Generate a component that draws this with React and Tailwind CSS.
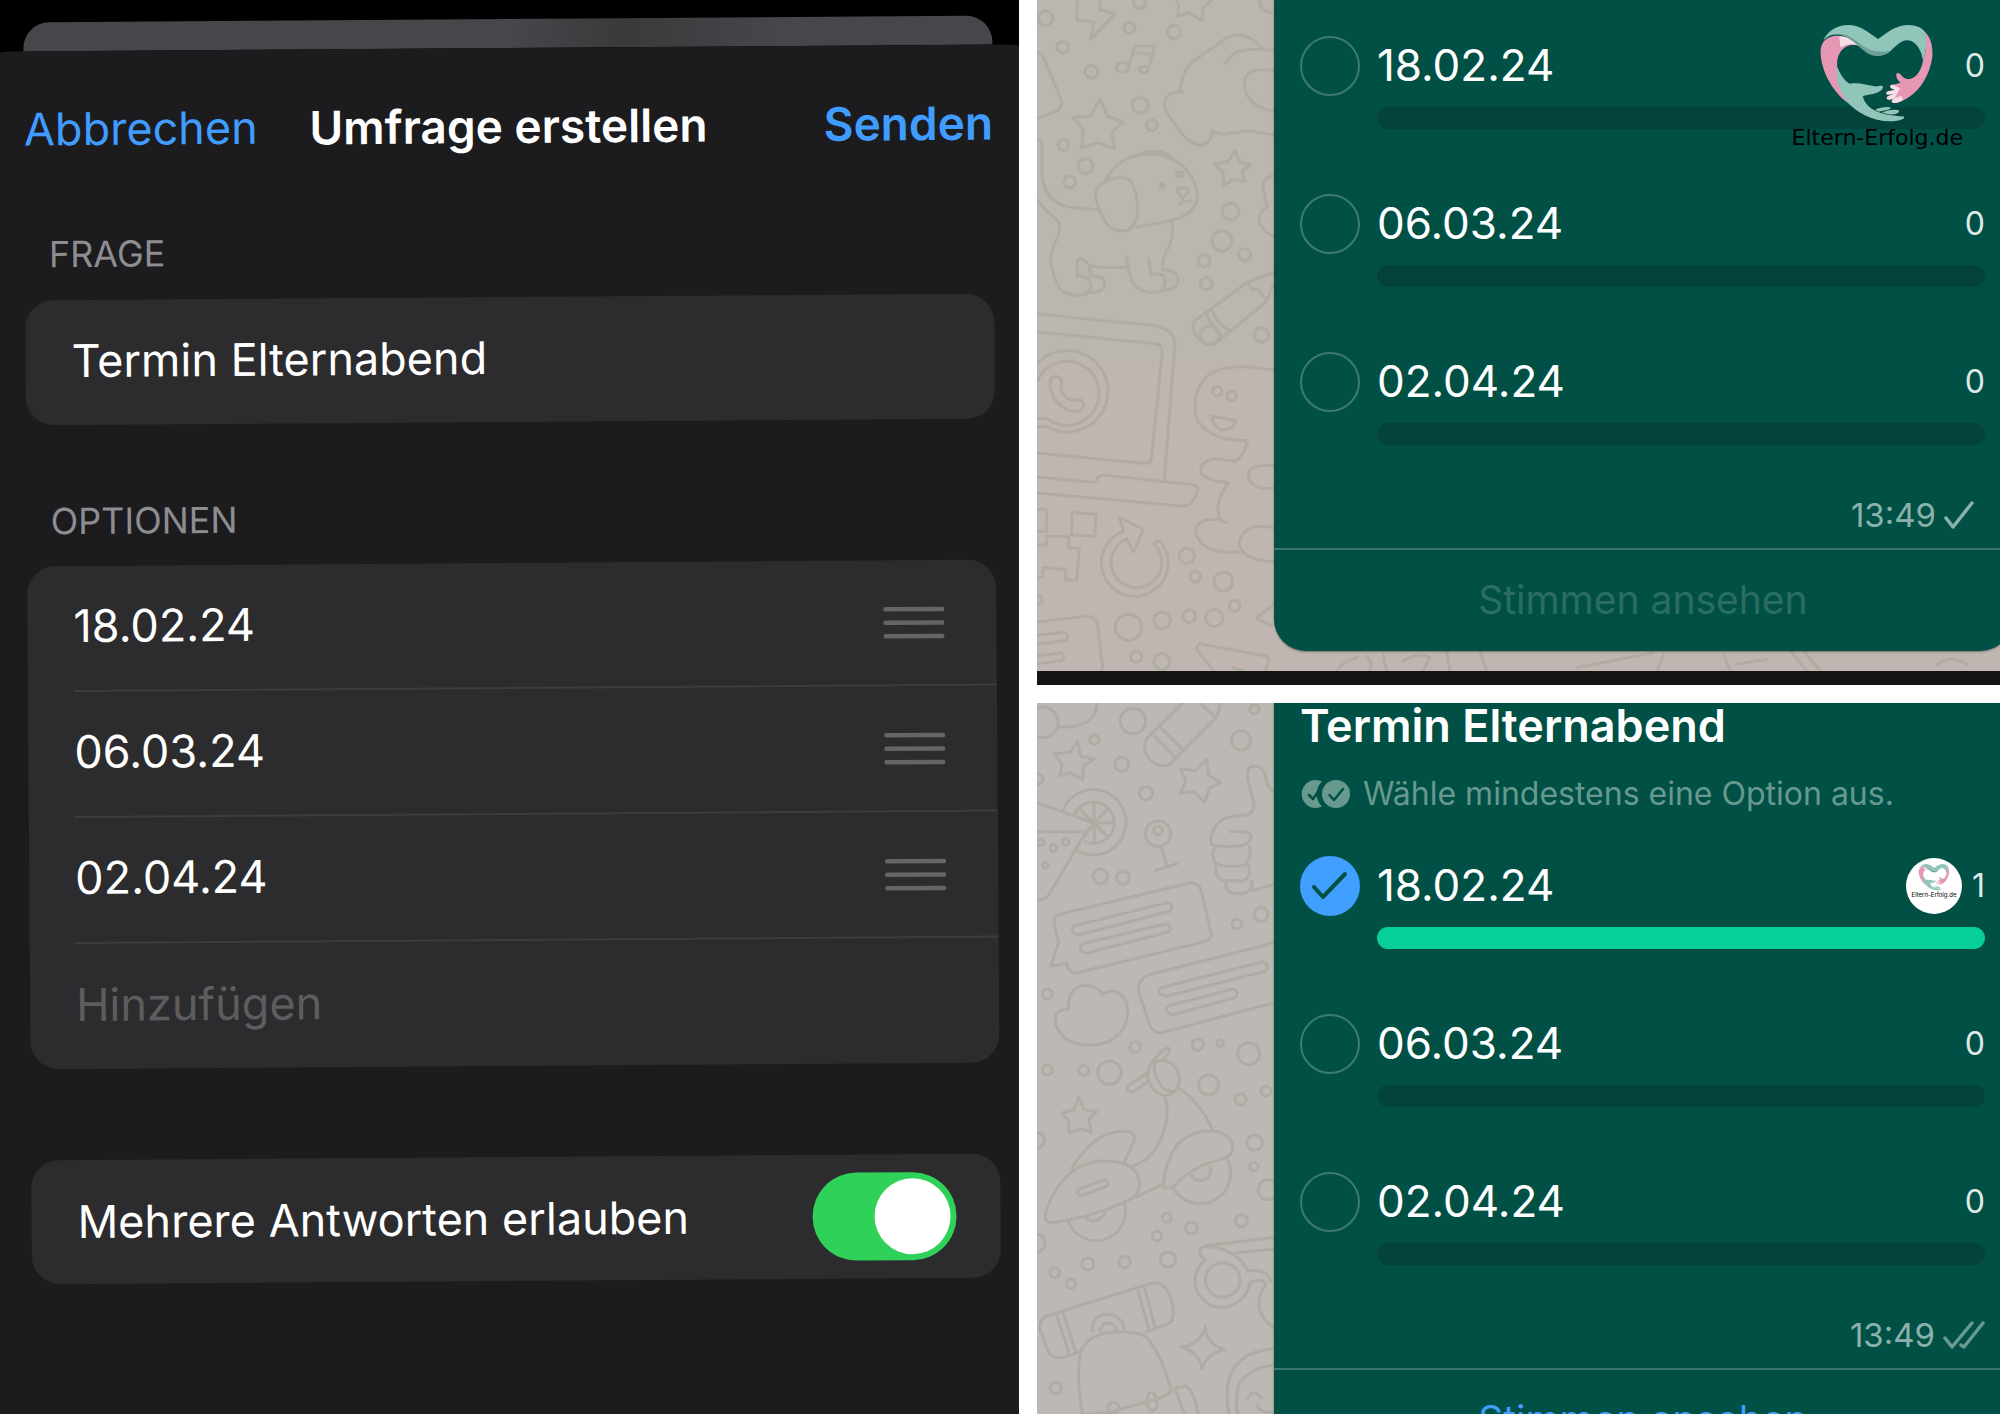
import React, { useState } from 'react';

const options = ['18.02.24', '06.03.24', '02.04.24'];

function HeartLogo({ className }) {
  return (
    <svg viewBox="120 66 348 302" className={className} aria-hidden="true">
      <path fill="#e597b4" d="M127 156C126 126 146 107 176 107C202 107 222 118 238 134C202 128 177 152 176 186C174 225 184 266 208 306C160 270 128 208 127 156Z" />
      <path fill="#f6dfe7" d="M182 108C206 108 224 120 240 136C220 129 202 130 186 142Z" />
      <path fill="#e597b4" d="M433 93C453 110 460 138 458 168C452 218 424 266 388 289C372 299 356 307 345 306C334 304 336 297 346 292L331 296C321 295 320 288 329 284L344 280L326 281C318 278 321 272 330 270L348 267L336 262C330 257 334 251 342 252L364 246C354 238 350 228 351 220C356 212 364 220 370 228C376 234 386 236 394 234C414 228 427 204 431 176C441 150 443 118 433 93Z" />
      <path fill="#f6dfe7" d="M362 262L346 292L331 296C321 295 320 288 329 284L344 280L326 281C318 278 321 272 330 270L348 267L336 262C330 257 334 251 342 252ZM345 306C334 304 336 297 346 292L366 284L372 296C362 302 352 306 345 306Z" />
      <path fill="#92c5b9" d="M134 122C148 90 180 74 212 75C250 76 275 104 297 116C320 102 345 76 385 75C412 75 428 84 436 96C443 124 440 152 430 180C426 148 408 121 385 120C360 120 346 144 326 158C306 170 280 165 262 153C240 138 216 104 176 102C156 102 142 112 134 122Z" />
      <path fill="#6f9f96" d="M148 108C184 92 214 106 242 130C268 150 296 160 334 151C312 172 284 170 262 156C238 140 214 106 176 103C164 103 156 104 148 108Z" />
      <path fill="#92c5b9" d="M176 198C186 224 198 240 213 249C240 244 264 253 290 257C300 257 308 252 312 258C311 273 290 279 252 285C256 306 270 320 296 332C322 344 350 343 373 346C379 352 366 358 340 360C282 362 238 336 208 306C180 268 170 236 176 198Z" />
      <path fill="#92c5b9" d="M288 326C304 318 324 316 336 320C332 327 314 328 300 332ZM308 335C324 327 350 323 360 329C358 339 342 341 328 339Z" />
    </svg>
  );
}

function DragHandle() {
  return (
    <svg viewBox="0 0 61 33" className="h-[33px] w-[61px] shrink-0" aria-hidden="true">
      <path d="M2 3H59M2 16.5H59M2 30H59" stroke="#656568" strokeWidth="4.5" strokeLinecap="round" />
    </svg>
  );
}

function CreatePoll() {
  const [multiple, setMultiple] = useState(true);

  return (
    <section className="min-h-0 overflow-hidden bg-black">
      <div className="flex h-full -rotate-[0.4deg] flex-col">
        <div className="ml-[28px] mr-[22px] mt-[19px] h-[29px] shrink-0 rounded-t-[26px] bg-linear-to-r from-[#46474b] from-50% via-[#3a3a3c] via-62% to-[#46474b] to-78%" />
        <form className="-mb-6 -ml-4 -mr-6 flex-1 rounded-t-[28px] bg-[#1c1c1e] pl-11 pr-[46px] pt-[50px]" onSubmit={(e) => e.preventDefault()}>
          <header className="grid grid-cols-[1fr_auto_1fr] items-center text-[46px] leading-[56px]">
            <button type="button" className="justify-self-start text-[45px] text-[#409cff]">
              Abbrechen
            </button>
            <h1 className="font-semibold text-white">Umfrage erstellen</h1>
            <button type="submit" className="justify-self-end font-semibold text-[#409cff]">
              Senden
            </button>
          </header>

          <label htmlFor="question" className="mt-[77px] block pl-6 text-[36px] leading-10 text-[#8d8d92]">
            FRAGE
          </label>
          <div className="mt-[26px] rounded-[28px] bg-[#2c2c2e] pl-[46px]">
            <input id="question" type="text" defaultValue="Termin Elternabend" className="h-[125px] w-full bg-transparent pb-1 text-[45px] text-white outline-none" />
          </div>

          <h2 className="mt-[76px] pl-6 text-[36px] leading-10 text-[#8d8d92]">OPTIONEN</h2>
          <ul className="mt-[25px] rounded-[28px] bg-[#2c2c2e] pl-[46px]">
            {options.map((option, i) => (
              <li key={option} className="flex h-[126px] items-center border-b-2 border-[#3d3d40] pr-[52px]">
                <input type="text" aria-label={`Option ${i + 1}`} defaultValue={option} className="min-w-0 flex-1 bg-transparent pb-1 text-[45px] text-white outline-none" />
                <DragHandle />
              </li>
            ))}
            <li className="flex h-[125px] items-center pr-[52px]">
              <input type="text" aria-label="Neue Option" placeholder="Hinzufügen" className="min-w-0 flex-1 bg-transparent pb-1 text-[45px] text-white outline-none placeholder:text-[#5d5d60]" />
            </li>
          </ul>

          <div className="mt-[91px] flex h-[124px] items-center justify-between rounded-[28px] bg-[#2c2c2e] pl-[46px] pr-11">
            <label htmlFor="multiple" className="text-[45px] text-white">
              Mehrere Antworten erlauben
            </label>
            <input
              id="multiple"
              type="checkbox"
              role="switch"
              checked={multiple}
              onChange={(e) => setMultiple(e.target.checked)}
              className="flex h-[88px] w-36 shrink-0 appearance-none items-center rounded-full bg-[#5b5b60] px-1.5 before:size-[76px] before:rounded-full before:bg-white checked:justify-end checked:bg-[#30d158]"
            />
          </div>
        </form>
      </div>
    </section>
  );
}

function PollOption({ id, label, votes, checked, onChange }) {
  return (
    <li className="grid grid-cols-[60px_1fr] gap-x-[17px] gap-y-[11px]">
      <span className="relative size-[60px]">
        <input id={id} type="checkbox" checked={checked} onChange={onChange} className="block size-[60px] appearance-none rounded-full border-2 border-[#3f7a70] checked:border-0 checked:bg-[#409fff]" />
        {checked && (
          <svg viewBox="0 0 60 60" className="pointer-events-none absolute inset-0" fill="none" aria-hidden="true">
            <path d="M14 31L23 41L45 18" stroke="#005046" strokeWidth="4" strokeLinecap="round" strokeLinejoin="round" />
          </svg>
        )}
      </span>
      <div className="flex items-center justify-between">
        <label htmlFor={id} className="pb-0.5 text-[44px] leading-[58px] text-white">
          {label}
        </label>
        <span className="flex items-center gap-2.5 text-[32px] text-[#dfe9e7]">
          {votes > 0 && (
            <span className="flex size-14 flex-col items-center rounded-full bg-white pt-[5px]">
              <HeartLogo className="h-7 w-8" />
              <span className="text-[6px] leading-[8px] text-black">Eltern-Erfolg.de</span>
            </span>
          )}
          {votes}
        </span>
      </div>
      <div className={`col-start-2 h-[22px] rounded-full ${votes > 0 ? 'bg-[#06cf9c]' : 'bg-[#03433c]'}`} />
    </li>
  );
}

function PollMessage({ name, title, hint, selected, read }) {
  const [picked, setPicked] = useState(selected);
  const toggle = (option) => setPicked(picked.includes(option) ? picked.filter((o) => o !== option) : [...picked, option]);

  return (
    <article className={`relative -mr-3 ml-[24.6%] shrink-0 bg-[#005046] shadow-[0_1px_2px_#00000060] ${read ? '' : 'rounded-b-[32px]'}`}>
      <div className={`pl-[26px] pr-[27px] ${title ? '' : 'pt-9'}`}>
        {title && <h2 className="text-[45px] font-semibold leading-[46px] text-white">{title}</h2>}
        {hint && (
          <p className="mb-[42px] mt-[25px] flex items-center gap-[13px] text-[32px] leading-10 text-[#68998f]">
            <svg viewBox="-2 0 50 28" className="h-7 w-[50px] shrink-0" fill="none" aria-hidden="true">
              <path d="M20 1.500A14 14 0 1 0 20 26.500A17 17 0 0 1 20 1.500Z" fill="#68998f" />
              <circle cx="34" cy="14" r="14" fill="#68998f" />
              <path d="M7 15L11 19L16 12M27.500 15L32 20L41 9" stroke="#005046" strokeWidth="2.500" strokeLinecap="round" strokeLinejoin="round" />
            </svg>
            {hint}
          </p>
        )}
        <ul className="flex flex-col gap-[65px]">
          {options.map((option) => (
            <PollOption
              key={option}
              id={`${name}-${option}`}
              label={option}
              votes={picked.includes(option) ? 1 : 0}
              checked={picked.includes(option)}
              onChange={() => toggle(option)}
            />
          ))}
        </ul>
        <p className={`mb-[13px] mt-[50px] flex items-center justify-end gap-2 text-[33px] leading-10 text-[#8ab1aa] ${read ? '' : 'pr-[11px]'}`}>
          <time>13:49</time>
          {read ? (
            <svg viewBox="0 0 42 28" className="h-7 w-[42px]" fill="none" aria-hidden="true">
              <path d="M2 17L9 26L29 2M18 24L21 26L40 2" stroke="#68998f" strokeWidth="3.500" strokeLinecap="round" strokeLinejoin="round" />
            </svg>
          ) : (
            <svg viewBox="0 0 30 28" className="h-7 w-[30px]" fill="none" aria-hidden="true">
              <path d="M2 17L9 26L28 2" stroke="#8ab1aa" strokeWidth="3.500" strokeLinecap="round" strokeLinejoin="round" />
            </svg>
          )}
        </p>
      </div>
      <button type="button" disabled={!read} className="block h-[103px] w-full border-t-2 border-[#3a766d] text-[39px] text-[#409cff] disabled:text-[#2b6d63]">
        Stimmen ansehen
      </button>
    </article>
  );
}

// Doodles are drawn at three units per pixel.
const upperDots = [
  [28, 55, 22], [310, 8, 18], [280, 83, 16], [413, 96, 20], [80, 142, 17], [166, 215, 19], [312, 315, 24], [347, 375, 16],
  [82, 434, 16], [148, 498, 22], [101, 545, 18], [583, 634, 25], [557, 722, 30], [625, 763, 18], [504, 781, 18], [510, 850, 18],
  [675, 1003, 22], [520, 1005, 28], [543, 1172, 14], [586, 1186, 14], [452, 1665, 23], [477, 1728, 16], [561, 1742, 28],
  [595, 1815, 16], [459, 1846, 19], [534, 1851, 26], [378, 1858, 25], [277, 1879, 39], [300, 1967, 17], [377, 1982, 24],
  [5, 1797, 14],
];

const upperDoodles = [
  'M124 -10L122 60L174 66L164 118L236 42L190 28L196 -10',
  'M418 -5L428 16L424 48L460 38L496 62L502 22L532 -5',
  'M672 -5Q664 30 705 38',
  'M276 200L296 138H356L336 208M290 158L348 162M276 202A18 11 0 1 1 242 200A18 11 0 1 1 276 202M336 210A13 10 0 1 1 310 208A13 10 0 1 1 336 210',
  'M-5 156Q16 156 26 180L74 296Q84 322 56 336L-5 356',
  'M192 296L214 348L262 366L226 396L236 446L186 428L136 442L142 388L110 352L164 348Z',
  'M596 450L610 486L642 492L618 512L624 544L592 538L562 554L560 514L534 492L576 484Z',
  'M430 274Q440 210 466 186L540 136Q600 84 650 120L680 146M712 152Q620 142 594 160L566 188M438 276Q384 274 384 318Q392 344 440 404Q480 446 510 430Q530 414 528 390Q540 406 580 400L640 392L712 404M712 212Q620 196 624 260Q636 320 712 334',
  'M-5 420Q18 412 18 440V520Q24 620 130 624L186 628M-5 590Q20 624 60 656Q80 676 66 706Q40 760 44 790Q56 840 74 868Q100 890 146 882Q172 870 162 842Q150 826 124 828V784Q126 768 146 780Q166 796 162 826Q206 826 206 850Q200 880 150 876M162 796Q210 806 272 800V770Q276 820 292 850Q320 884 370 874Q392 860 386 830Q376 816 344 824L338 776M386 868Q430 866 426 832Q416 808 380 808Q376 780 392 750Q412 720 408 660',
  'M206 544Q176 560 178 590Q190 640 216 676Q236 696 276 690Q306 670 304 620Q302 570 282 540Q256 520 206 544Q240 480 300 466Q370 450 430 490Q480 530 484 590Q480 640 410 660Q360 672 302 680M316 458Q390 440 422 486M424 564H456V576L438 592L424 576ZM438 592L442 606L428 612M442 606L462 602',
  'M378 550A6 6 0 1 0 380 562A6 6 0 1 0 378 550M430 516A7 7 0 1 0 432 528A7 7 0 1 0 430 516',
  'M712 526Q676 532 680 560L692 620Q660 640 670 670Q688 700 712 706',
  'M636 844L476 960Q460 990 490 1016Q516 1044 548 1020L690 904L712 850M636 844L712 816M636 844L648 868L668 866L690 904M510 936Q524 980 552 1000M528 928Q540 970 580 990',
  'M-5 940L360 976Q420 990 416 1040L384 1438M-5 994L360 1030Q380 1034 378 1060L346 1370Q346 1390 320 1388L-5 1356M-5 1428L160 1444Q184 1446 184 1430Q190 1422 210 1424L470 1452Q490 1456 484 1470Q466 1520 436 1516L-5 1476',
  'M-5 1280L30 1276A122 122 0 1 0 -5 1100M-5 1254L34 1254A96 96 0 1 0 5 1140M42 1156Q40 1124 66 1128Q84 1140 74 1166Q86 1194 108 1200Q140 1188 144 1216Q130 1240 104 1232Q50 1210 42 1156Z',
  'M712 1110Q560 1080 510 1130Q464 1180 480 1250Q510 1320 634 1320Q620 1370 596 1382L540 1374Q490 1380 494 1416Q510 1440 576 1446Q530 1510 552 1560L572 1566M554 1556Q470 1550 480 1600Q500 1660 606 1654M712 1582Q620 1560 608 1630Q620 1680 712 1682M712 1394Q630 1390 636 1430Q650 1470 712 1462M526 1246L598 1260Q594 1286 562 1288Q534 1286 526 1246Z',
  'M-5 1526H32V1592L-5 1590M32 1606V1632H-5M108 1534L180 1542L176 1606L106 1602ZM32 1606L98 1608V1640L130 1644L122 1738H90L88 1706L22 1700L18 1728L-5 1736',
  'M250 1550L322 1586L292 1654L272 1614A76 76 0 1 0 354 1630Q360 1616 376 1626A100 100 0 1 1 262 1592Z',
  'M-5 1864L150 1846Q180 1846 184 1870L200 2000L190 2020M-5 1904L84 1894Q100 1904 92 1918L-5 1932M-5 1966L76 1956Q90 1966 78 1978L-5 1990',
  'M712 1810L660 1852L704 1874M490 1928L690 1966Q700 1970 696 1984L684 2020M490 1928Q474 1940 490 1956L540 2020M590 2000L620 2010',
  'M900 2010Q920 1980 960 1970M990 1965Q1010 1985 1000 2010M1040 1960L1050 2010M1100 1980Q1150 1950 1180 1970L1160 2010M1230 1950L1240 2010M1330 1950L1350 2010M1620 2000L1850 1955M1880 1960L1860 2010M2060 1960L2080 2010M2100 1990L2190 1975M2260 1950L2310 2010M2300 1950L2350 2010M2700 1990Q2740 1960 2790 1990',
];

const lowerDots = [
  [20, 64, 46], [291, 60, 38], [175, 116, 14], [655, 25, 14], [615, 118, 29], [257, 190, 21], [330, 277, 20], [5, 234, 16],
  [14, 424, 10], [52, 441, 10], [89, 423, 10], [28, 493, 9], [193, 526, 22], [261, 530, 20], [366, 388, 13], [366, 398, 38],
  [603, 669, 15], [675, 640, 21], [34, 879, 15], [297, 1038, 16], [485, 1031, 17], [553, 1026, 10], [638, 1058, 33],
  [34, 1107, 15], [143, 1108, 15], [220, 1115, 35], [518, 1152, 30], [614, 1195, 17], [690, 1170, 15], [656, 1325, 23],
  [654, 1397, 13], [696, 1466, 30], [616, 1559, 18], [392, 1550, 14], [466, 1581, 18], [363, 1605, 14], [396, 1676, 23],
  [56, 1715, 15], [155, 1689, 18], [266, 1683, 17], [105, 1748, 14], [59, 2061, 17], [4, 1318, 22], [2, 1626, 26],
  [560, 1737, 52], [232, 2120, 16],
];

const lowerDoodles = [
  'M66 78Q180 84 184 4',
  'M124 120L134 166L174 174L142 196L140 236L104 216L72 224L78 190L56 158L104 154Z',
  'M512 176L518 222L554 244L520 262L506 304L474 272L432 276L450 242L434 204L478 208Z',
  'M440 6L334 110Q314 140 340 174Q370 204 400 190L540 50Q556 20 550 4M490 4L534 44M356 106L416 166M374 80L440 146',
  'M80 330A98 98 0 1 1 126 450M116 340A62 62 0 1 1 148 422M174 366L174 308M174 366L214 326M174 366L232 366M174 366L216 408M174 366L176 428M174 366L130 322',
  'M-5 302L174 366L150 392H-5M150 392L40 580Q28 600 -5 596M174 366L120 440',
  'M376 436L392 494M358 508L424 488',
  'M712 272Q694 260 684 214Q672 190 646 196Q630 206 636 236L654 310Q654 342 620 344Q560 342 538 376Q520 410 526 430Q540 440 620 434Q650 420 644 400Q630 390 584 392M540 434Q520 460 540 488Q560 500 624 494Q650 470 640 436M540 492Q534 520 556 538L620 540Q646 530 638 494M568 540L572 566Q582 580 620 578Q650 574 648 540M650 568L712 552',
  'M70 640L460 546Q490 544 496 570L526 700Q526 716 506 722L120 816Q96 814 92 786L44 796L68 724L54 664Q54 646 70 640ZM118 674L396 604Q416 612 404 630L128 702Q106 700 110 680ZM140 728L390 668Q410 674 400 692L154 756Q132 752 132 736Z',
  'M712 726L336 822Q304 836 308 870L342 976Q356 1000 380 994L712 906M384 858L680 782Q702 788 690 810L390 886Q364 882 372 862ZM400 914L590 864Q612 872 598 890L410 942Q386 936 392 920Z',
  'M98 926Q90 866 146 852Q190 858 200 880Q240 852 270 900Q290 970 230 1016Q160 1050 90 1014Q50 980 60 940Q74 924 98 926Z',
  'M128 1188L144 1226L182 1232L158 1256L166 1292L132 1284L100 1296L98 1260L76 1236L114 1226Z',
  'M376 1078Q340 1080 334 1118Q340 1170 382 1184Q430 1180 430 1130Q420 1080 376 1078M358 1080Q346 1120 386 1166L416 1172M334 1116L276 1154Q264 1172 292 1172L338 1140M340 1096Q370 1050 396 1040Q410 1050 380 1078M386 1184Q406 1250 370 1324Q340 1380 292 1394M428 1162Q490 1200 532 1290',
  'M32 1560Q20 1540 50 1484Q100 1390 190 1380Q280 1376 304 1420Q320 1460 296 1488Q200 1540 60 1564Q40 1566 32 1560ZM106 1404Q180 1280 280 1292Q300 1296 294 1320L266 1382M126 1466L206 1436Q220 1442 212 1456L136 1484Q118 1480 126 1466ZM96 1558A88 88 0 0 0 264 1504M148 1546Q170 1576 206 1540V1530',
  'M382 1460Q384 1390 420 1336Q470 1280 546 1292Q600 1310 588 1350Q580 1370 550 1376Q460 1400 420 1452Q400 1464 382 1460ZM412 1462A88 88 0 1 0 572 1372M466 1420A30 30 0 1 0 522 1396M302 1488L382 1448',
  'M712 1610L510 1634Q484 1640 494 1664L508 1676Q470 1710 478 1756Q500 1820 560 1820Q630 1810 642 1744Q680 1730 690 1750M506 1636Q600 1640 636 1710Q690 1700 706 1742M600 1656L712 1644M690 1750Q660 1790 672 1830Q684 1860 712 1880',
  'M34 1844L350 1746Q384 1738 404 1790Q420 1840 404 1864L330 1894M34 1844Q4 1860 14 1890L36 1950Q44 1974 80 1970L134 1952M60 1836L100 1960M80 1830L120 1956M304 1762L340 1890M324 1756L358 1880M168 1890Q170 1840 216 1840Q260 1846 266 1888M192 1888Q200 1866 216 1866Q240 1870 244 1892',
  'M132 1960Q150 1900 230 1894Q310 1886 336 1914Q380 1970 406 2070Q390 2090 340 2100L220 2134L140 2142Q120 2040 132 1960ZM416 2062L450 2054Q480 2080 486 2142M416 2062L446 2142M336 2080Q352 2066 360 2090Q370 2120 350 2130Q326 2120 336 2080Z',
  'M508 1876Q512 1930 566 1946Q512 1956 498 2004Q492 1956 436 1938Q496 1930 508 1876Z',
  'M712 1944Q610 1950 580 2030Q566 2080 580 2142M712 1992Q640 2000 608 2050Q596 2100 606 2142M636 2092Q650 2060 676 2090M662 2114Q680 2140 712 2132',
];

function Doodles({ paths, dots, viewBox }) {
  return (
    <svg viewBox={viewBox} preserveAspectRatio="xMinYMin slice" className="absolute inset-0 size-full" fill="none" stroke="#b0aba4" strokeWidth="9" strokeLinecap="round" strokeLinejoin="round" aria-hidden="true">
      {paths.map((d) => (
        <path key={d} d={d} />
      ))}
      {dots.map(([cx, cy, r]) => (
        <circle key={`${cx}-${cy}`} cx={cx} cy={cy} r={r} />
      ))}
    </svg>
  );
}

export default function App() {
  return (
    <main className="grid h-screen grid-cols-[1019fr_963fr] gap-[18px] overflow-hidden bg-white font-['Inter',sans-serif]">
      <CreatePoll />

      <div className="flex min-h-0 min-w-0 flex-col gap-[18px]">
        <section className="relative shrink-0 overflow-hidden border-b-[14px] border-[#141615] bg-linear-to-b from-[#bbb6b0] from-50% to-[#c0b6b1] to-60% pb-5">
          <Doodles paths={upperDoodles} dots={upperDots} viewBox="3 0 2889 2010" />
          <PollMessage name="sent" selected={[]} />
          <div className="absolute right-[37px] top-[22px] flex flex-col items-center">
            <HeartLogo className="h-[102px] w-[118px]" />
            <p className="font-['DejaVu_Sans',sans-serif] text-[22px] leading-7 text-black">Eltern-Erfolg.de</p>
          </div>
        </section>

        <section className="relative min-h-0 flex-1 overflow-hidden bg-[#bcb8b3]">
          <Doodles paths={lowerDoodles} dots={lowerDots} viewBox="3 6 2889 2136" />
          <PollMessage name="answered" title="Termin Elternabend" hint="Wähle mindestens eine Option aus." selected={['18.02.24']} read />
        </section>
      </div>
    </main>
  );
}
